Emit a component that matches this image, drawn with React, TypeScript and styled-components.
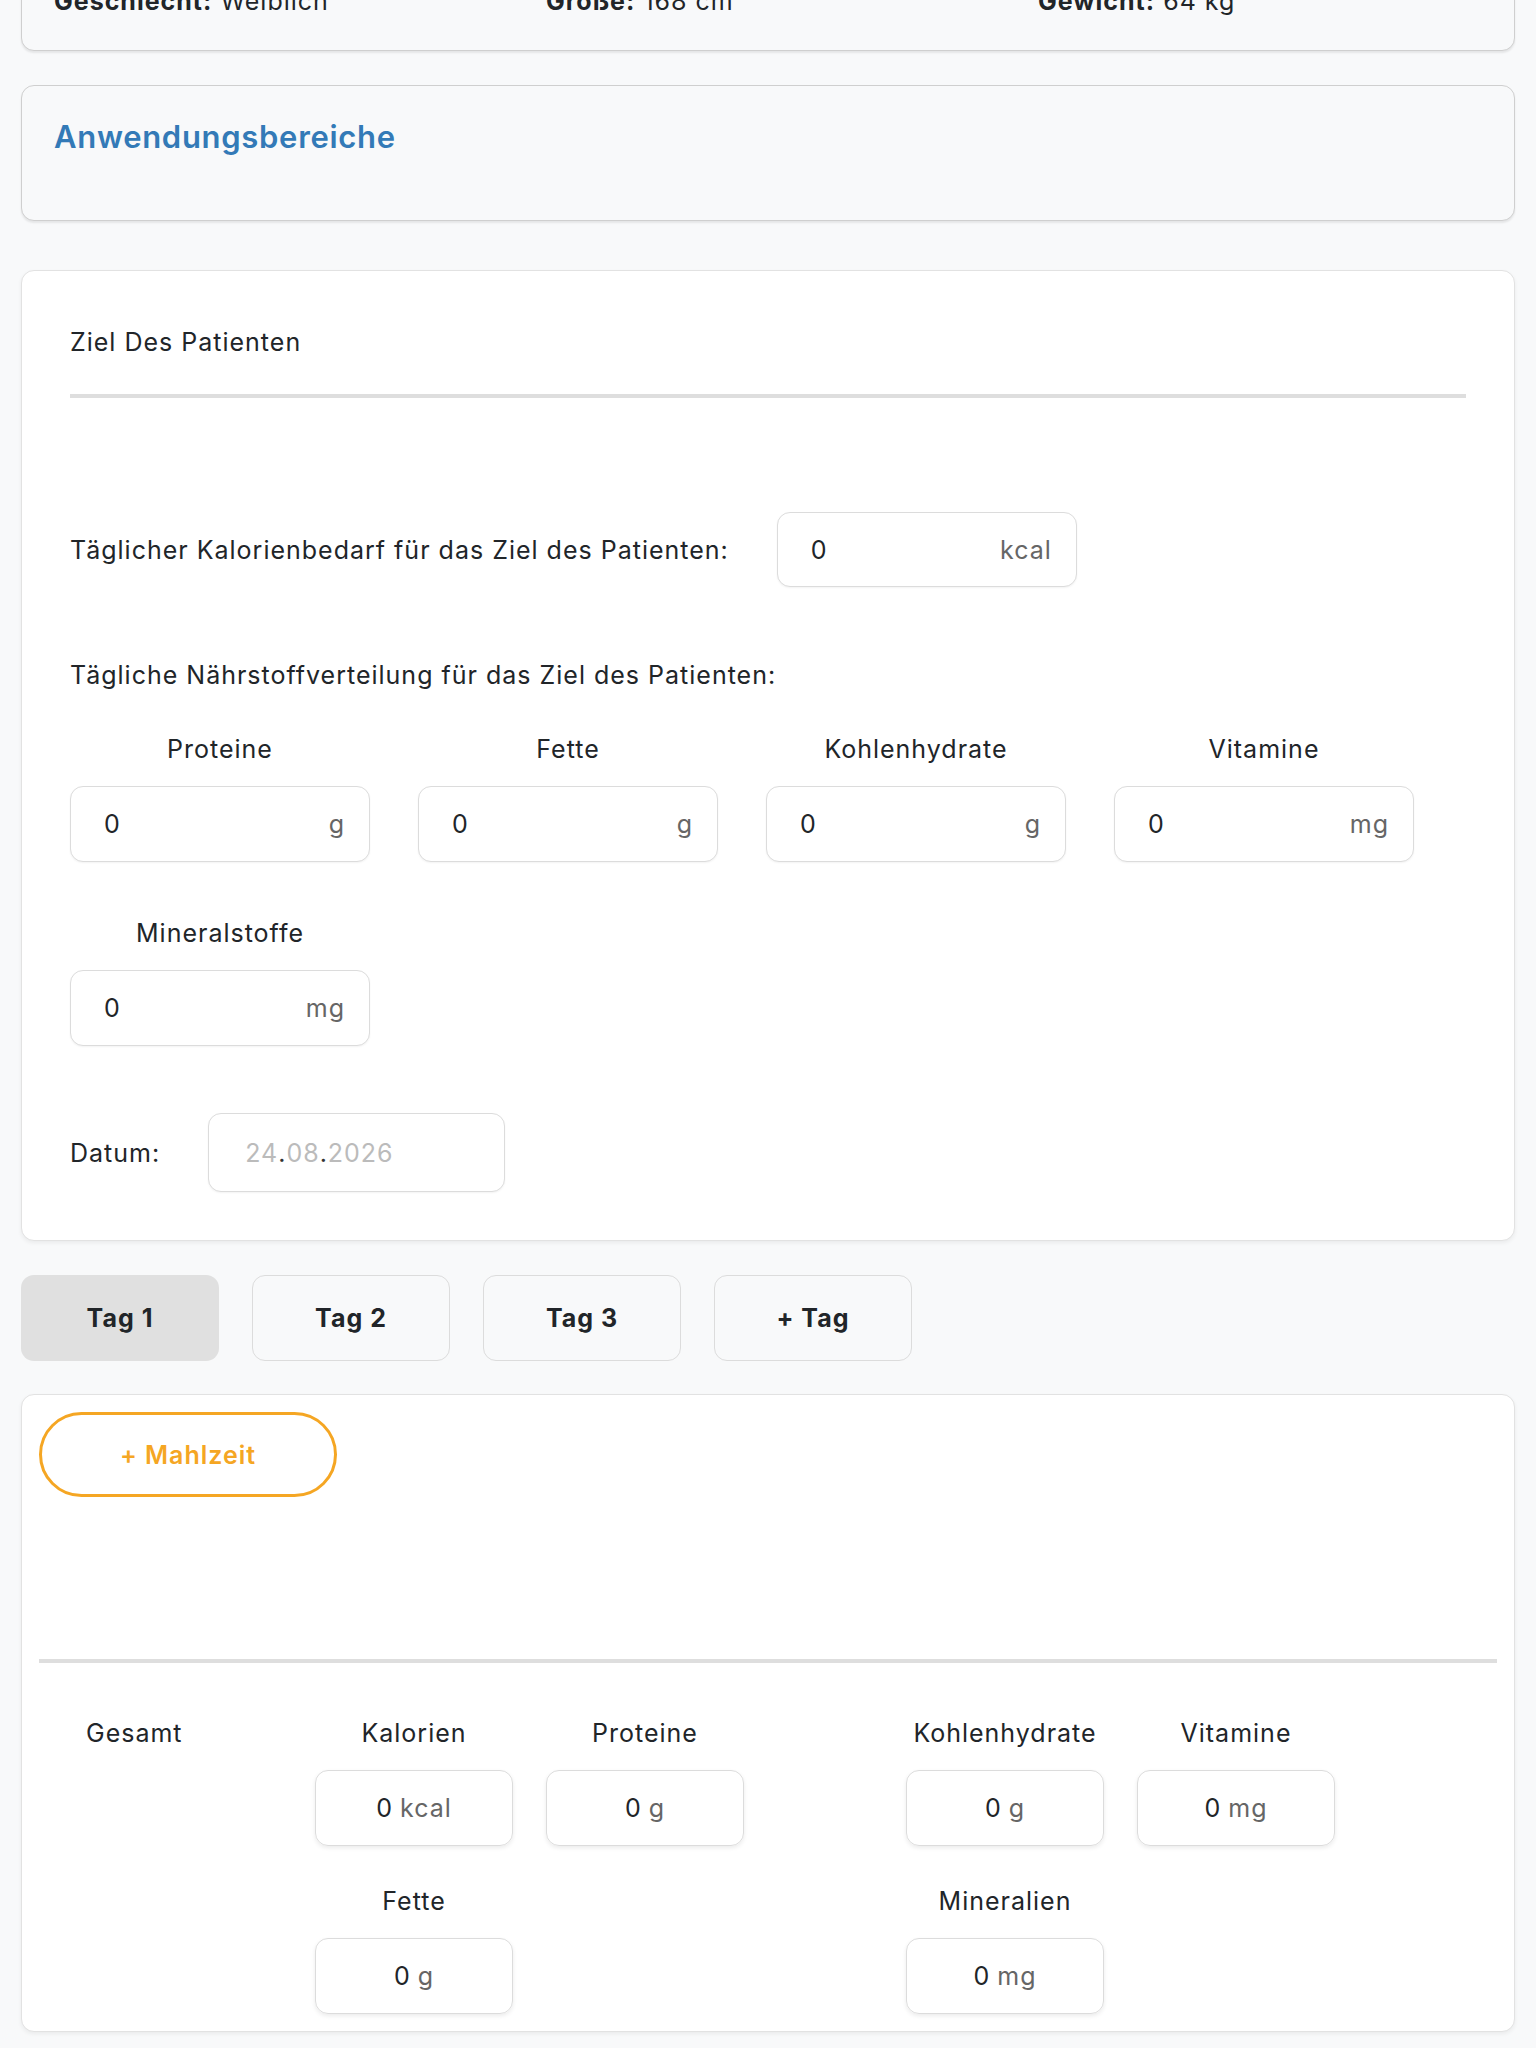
import React from "react";
import styled, { createGlobalStyle } from "styled-components";

const GlobalStyle = createGlobalStyle`
  body {
    margin: 0;
    background: #f8f9fa;
    font-family: Inter, "Liberation Sans", sans-serif;
    color: #212529;
    font-size: 25px;
    letter-spacing: 1px;
  }
`;

const Page = styled.div`
  padding: 0 21px 40px;
  overflow: hidden;
`;

const InfoCard = styled.div`
  margin-top: -35px;
  background: #f8f9fa;
  border: 1.5px solid #cfcfcf;
  border-radius: 13px;
  box-shadow: 0 2px 2px rgba(0, 0, 0, 0.08);
  padding: 20px 32px 34px;
  display: grid;
  grid-template-columns: 492px 492px 1fr;
  line-height: 30px;
`;

const InfoItem = styled.div`
  b {
    font-weight: 700;
  }
`;

const SectionCard = styled.div`
  margin-top: 34px;
  background: #f8f9fa;
  border: 1.5px solid #cfcfcf;
  border-radius: 13px;
  box-shadow: 0 2px 2px rgba(0, 0, 0, 0.08);
  padding: 33px 32px 65px;
`;

const SectionTitle = styled.h3`
  margin: 0;
  font-size: 31px;
  letter-spacing: 0.7px;
  line-height: 36px;
  font-weight: 600;
  color: #337ab7;
`;

const WhiteCard = styled.div<{ $pad: number; $top: number }>`
  margin-top: ${(p) => p.$top}px;
  background: #fff;
  border: 1.5px solid #e2e2e2;
  border-radius: 13px;
  box-shadow: 0 2px 4px rgba(0, 0, 0, 0.06);
  padding: ${(p) => p.$pad}px;
`;

const GoalTitle = styled.div`
  margin-top: 8px;
  line-height: 30px;
`;

const Divider = styled.div<{ $top: number }>`
  margin-top: ${(p) => p.$top}px;
  height: 4px;
  background: #dedede;
`;

const Row = styled.div<{ $top: number; $gap: number }>`
  margin-top: ${(p) => p.$top}px;
  display: flex;
  align-items: center;
  gap: ${(p) => p.$gap}px;
`;

const Label = styled.div`
  line-height: 30px;
`;

const Text = styled.div<{ $top: number }>`
  margin-top: ${(p) => p.$top}px;
  line-height: 30px;
`;

const InputBox = styled.div<{ $h?: number }>`
  box-sizing: border-box;
  width: 300px;
  height: ${(p) => p.$h || 76}px;
  border: 1.5px solid #dcdcdc;
  border-radius: 13px;
  background: #fff;
  box-shadow: 0 1px 2px rgba(0, 0, 0, 0.05);
  display: flex;
  align-items: center;
  justify-content: space-between;
  padding: 0 24px 0 33px;
`;

const Unit = styled.span`
  color: #666;
`;

const FieldGrid = styled.div<{ $top: number }>`
  margin-top: ${(p) => p.$top}px;
  display: grid;
  grid-template-columns: repeat(4, 300px);
  column-gap: 48px;
  row-gap: 56px;
`;

const Field = styled.div`
  display: flex;
  flex-direction: column;
  align-items: center;
  gap: 22px;
`;

const DateBox = styled(InputBox)`
  width: 297px;
  padding-left: 36px;
  color: #bbb;
  justify-content: flex-start;
`;

const Dot = styled.span`
  color: #333;
`;

const Tabs = styled.div`
  margin-top: 34px;
  display: flex;
  gap: 33px;
`;

const Tab = styled.button<{ $active?: boolean }>`
  width: 198px;
  height: 86px;
  border-radius: 13px;
  border: ${(p) => (p.$active ? "none" : "1.5px solid #dcdcdc")};
  background: ${(p) => (p.$active ? "#e0e0e0" : "transparent")};
  font-family: inherit;
  font-size: 25px;
  letter-spacing: 1px;
  font-weight: 700;
  color: #212529;
`;

const MealButton = styled.button`
  width: 298px;
  height: 85px;
  border: 3px solid #f5a623;
  border-radius: 43px;
  background: #fff;
  color: #f5a623;
  font-family: inherit;
  font-size: 25px;
  letter-spacing: 1px;
  font-weight: 600;
`;

const Totals = styled.div`
  margin-top: 55px;
  padding-left: 47px;
  display: flex;
`;

const TotalsLabel = styled.div`
  width: 229px;
  line-height: 30px;
`;

const TotalsGroup = styled.div`
  flex: 1;
  display: flex;
  flex-wrap: wrap;
  column-gap: 33px;
  row-gap: 40px;
  align-content: flex-start;
`;

const TotalField = styled.div`
  width: 198px;
  display: flex;
  flex-direction: column;
  align-items: center;
  gap: 22px;
`;

const TotalBox = styled.div`
  box-sizing: border-box;
  width: 198px;
  height: 76px;
  border: 1.5px solid #dcdcdc;
  border-radius: 13px;
  box-shadow: 0 2px 4px rgba(0, 0, 0, 0.08);
  display: flex;
  align-items: center;
  justify-content: center;
  gap: 7px;
`;

const nutrients = [
  { name: "Proteine", unit: "g" },
  { name: "Fette", unit: "g" },
  { name: "Kohlenhydrate", unit: "g" },
  { name: "Vitamine", unit: "mg" },
  { name: "Mineralstoffe", unit: "mg" },
];

const groupA = [
  { name: "Kalorien", unit: "kcal" },
  { name: "Proteine", unit: "g" },
  { name: "Fette", unit: "g" },
];

const groupB = [
  { name: "Kohlenhydrate", unit: "g" },
  { name: "Vitamine", unit: "mg" },
  { name: "Mineralien", unit: "mg" },
];

const Total = ({ name, unit }: { name: string; unit: string }) => (
  <TotalField>
    <Label>{name}</Label>
    <TotalBox>
      <span>0</span>
      <Unit>{unit}</Unit>
    </TotalBox>
  </TotalField>
);

export default function App() {
  return (
    <>
      <GlobalStyle />
      <Page>
        <InfoCard>
          <InfoItem>
            <b>Geschlecht:</b> Weiblich
          </InfoItem>
          <InfoItem>
            <b>Größe:</b> 168 cm
          </InfoItem>
          <InfoItem>
            <b>Gewicht:</b> 64 kg
          </InfoItem>
        </InfoCard>

        <SectionCard>
          <SectionTitle>Anwendungsbereiche</SectionTitle>
        </SectionCard>

        <WhiteCard $pad={48} $top={49}>
          <GoalTitle>Ziel Des Patienten</GoalTitle>
          <Divider $top={37} />
          <Row $top={114} $gap={48}>
            <Label>Täglicher Kalorienbedarf für das Ziel des Patienten:</Label>
            <InputBox $h={75}>
              <span>0</span>
              <Unit>kcal</Unit>
            </InputBox>
          </Row>
          <Text $top={73}>Tägliche Nährstoffverteilung für das Ziel des Patienten:</Text>
          <FieldGrid $top={44}>
            {nutrients.map((n) => (
              <Field key={n.name}>
                <Label>{n.name}</Label>
                <InputBox>
                  <span>0</span>
                  <Unit>{n.unit}</Unit>
                </InputBox>
              </Field>
            ))}
          </FieldGrid>
          <Row $top={67} $gap={48}>
            <Label>Datum:</Label>
            <DateBox $h={79}>
              24<Dot>.</Dot>08<Dot>.</Dot>2026
            </DateBox>
          </Row>
        </WhiteCard>

        <Tabs>
          <Tab $active>Tag 1</Tab>
          <Tab>Tag 2</Tab>
          <Tab>Tag 3</Tab>
          <Tab>+ Tag</Tab>
        </Tabs>

        <WhiteCard $pad={17} $top={33}>
          <MealButton>+ Mahlzeit</MealButton>
          <Divider $top={162} />
          <Totals>
            <TotalsLabel>Gesamt</TotalsLabel>
            <TotalsGroup>
              {groupA.map((t) => (
                <Total key={t.name} {...t} />
              ))}
            </TotalsGroup>
            <TotalsGroup>
              {groupB.map((t) => (
                <Total key={t.name} {...t} />
              ))}
            </TotalsGroup>
          </Totals>
        </WhiteCard>
      </Page>
    </>
  );
}
